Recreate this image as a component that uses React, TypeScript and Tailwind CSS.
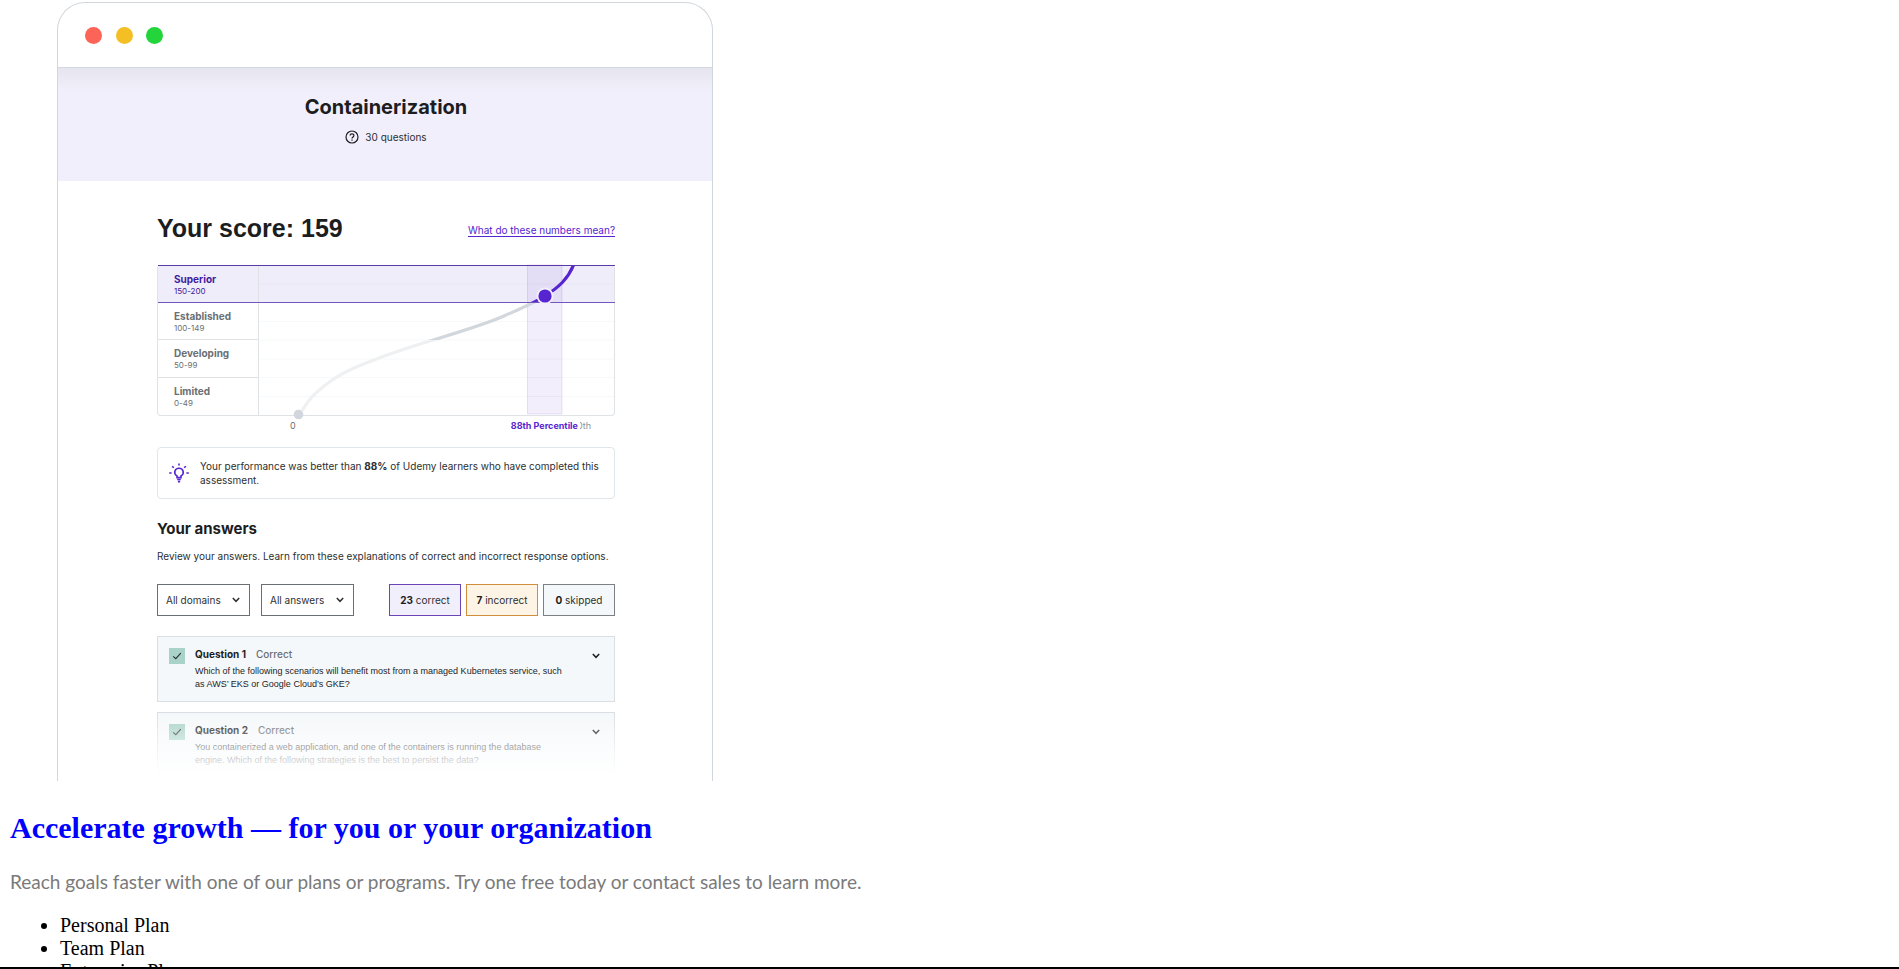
import { useState } from "react";

const levels = [
  { name: "Superior", range: "150-200" },
  { name: "Established", range: "100-149" },
  { name: "Developing", range: "50-99" },
  { name: "Limited", range: "0-49" },
];

const questions = [
  {
    title: "Question 1",
    text: "Which of the following scenarios will benefit most from a managed Kubernetes service, such as AWS’ EKS or Google Cloud’s GKE?",
  },
  {
    title: "Question 2",
    text: "You containerized a web application, and one of the containers is running the database engine. Which of the following strategies is the best to persist the data?",
  },
];

const curve =
  "M43 146 C47 139 51 133 57 128 C75 111 93 103 115 95 C151 80 211 66 245 51 C263 43 273 39 286 31 C300 22 309 14 315 -1";

function Chevron({ className }: { className: string }) {
  return (
    <svg viewBox="0 0 8 6" className={className} fill="none" stroke="currentColor" strokeWidth="1.5" aria-hidden="true">
      <path d="M0.8 1 L4 4.3 L7.2 1" />
    </svg>
  );
}

function Filter({ id, label }: { id: string; label: string }) {
  return (
    <div className="relative w-[93px]">
      <select
        id={id}
        aria-label={label}
        className="h-8 w-full appearance-none border border-[#6a6f73] bg-white pl-2 text-[10px] text-[#2d2f31]"
      >
        <option>{label}</option>
      </select>
      <Chevron className="pointer-events-none absolute top-[13px] right-[10px] h-[6px] w-2 text-[#2d2f31]" />
    </div>
  );
}

function Plot() {
  return (
    <svg viewBox="0 0 355 150" className="block h-[150px] w-full overflow-visible" preserveAspectRatio="none" aria-hidden="true">
      <defs>
        <clipPath id="top"><rect x="0" y="0" width="355" height="37.5" /></clipPath>
        <clipPath id="mid"><rect x="0" y="37.5" width="355" height="37.5" /></clipPath>
        <clipPath id="low"><rect x="0" y="75" width="355" height="75" /></clipPath>
      </defs>
      <g stroke="#f7f8f9">
        {[56.5, 75, 94, 112.5, 131.5].map((y) => (
          <line key={y} x1="0" x2="355" y1={y} y2={y} />
        ))}
      </g>
      <line x1="0" x2="355" y1="19" y2="19" stroke="#e9e6f5" />
      <rect x="268.5" y="0" width="34.5" height="149" fill="#5624d0" fillOpacity="0.08" stroke="#5624d0" strokeOpacity="0.12" />
      <g fill="none" strokeWidth="3.2">
        <path d={curve} stroke="#eff0f2" clipPath="url(#low)" />
        <path d={curve} stroke="#d1d7dc" clipPath="url(#mid)" />
        <path d={curve} stroke="#5624d0" clipPath="url(#top)" />
      </g>
      <path d="M-1 37.5 H356" stroke="#7556bd" />
      <path d="M-1 0.5 H356" stroke="#5b3aa8" />
      <circle cx="39.5" cy="149.5" r="4.8" fill="#d1d7dc" />
      <circle cx="286" cy="31" r="8.5" fill="#f1effb" />
      <circle cx="286" cy="31" r="6.6" fill="#5624d0" />
    </svg>
  );
}

function ScoreChart() {
  return (
    <div className="mt-[21px]">
      <div className="grid h-[151px] grid-cols-[101px_1fr] rounded-sm border border-t-0 border-[#dfe3e6] bg-linear-to-b from-[#f0edfa] from-25% to-white to-25%">
        <ul className="grid grid-rows-4 border-r border-[#dfe3e6]">
          {levels.map((level, i) => (
            <li
              key={level.name}
              className={
                i === 0
                  ? "border-t border-b border-t-[#5b3aa8] border-b-[#7556bd] pt-[7px] pl-4 text-[#401b9c]"
                  : i === 3
                    ? "pt-[7px] pl-4 text-[#6a6f73]"
                    : "border-b border-[#dfe3e6] pt-[7px] pl-4 text-[#6a6f73]"
              }
            >
              <div className="text-[10px] leading-3 font-bold">{level.name}</div>
              <div className="text-[8px] leading-3">{level.range}</div>
            </li>
          ))}
        </ul>
        <Plot />
      </div>
      <div className="flex justify-between pr-[24px] pl-[133px] text-[9px] leading-5">
        <span className="text-[#6a6f73]">0</span>
        <span className="flex">
          <span className="z-10 bg-white pr-[2px] font-bold text-[#5624d0]">88th Percentile</span>
          <span className="-ml-[3px] text-[#8d9195]">0th</span>
        </span>
      </div>
    </div>
  );
}

function Question({ title, text }: { title: string; text: string }) {
  const [open, setOpen] = useState(false);
  return (
    <button
      type="button"
      aria-expanded={open}
      onClick={() => setOpen(!open)}
      className="flex h-[66px] w-full items-start border border-[#d9dfe3] bg-[#f5f8fa] pt-[11px] pr-[14px] pl-[11px] text-left"
    >
      <span className="flex h-4 w-4 shrink-0 items-center justify-center bg-[#a9d2c9]">
        <svg viewBox="0 0 16 16" className="h-4 w-4" fill="none" stroke="#2d2f31" strokeWidth="1.1" aria-hidden="true">
          <path d="M4.2 8.3 L6.8 10.7 L11.8 5.2" />
        </svg>
      </span>
      <span className="ml-[10px] flex-1">
        <span className="flex gap-[10px] text-[10px] leading-3">
          <span className="font-bold text-[#1c1d1f]">{title}</span>
          <span className="font-medium text-[#6a6f73]">Correct</span>
        </span>
        <span className="mt-[5px] block max-w-[376px] font-['Liberation_Sans',sans-serif] text-[9px] leading-[13px] text-[#1c1d1f]">
          {text}
        </span>
      </span>
      <Chevron className="mt-[5px] h-[6px] w-2 text-[#1c1d1f]" />
    </button>
  );
}

function Tally({ count, label, tone }: { count: number; label: string; tone: string }) {
  return (
    <button type="button" className={`h-8 w-[72px] border text-[10px] text-[#2d2f31] ${tone}`}>
      <b className="text-[#1c1d1f]">{count}</b> {label}
    </button>
  );
}

function AssessmentWindow() {
  return (
    <section className="h-[779px] max-w-[656px] overflow-hidden rounded-t-[28px] border border-b-0 border-[#d1d7dc] font-[Inter,sans-serif] text-[#2d2f31]">
      <div className="h-[65px] border-b border-[#d1d7dc] pt-6 pl-[27px]">
        <div className="flex w-[78px] justify-between">
          <span className="h-[17px] w-[17px] rounded-full bg-[#fd6458]" />
          <span className="h-[17px] w-[17px] rounded-full bg-[#f4bf24]" />
          <span className="h-[17px] w-[17px] rounded-full bg-[#23d43b]" />
        </div>
      </div>
      <header className="h-[113px] bg-linear-to-b from-[#e6e4ef] to-[#f1effb] to-20% pt-[25px] pl-[2px] text-center">
        <h2 className="text-[20px] leading-7 font-bold text-[#1c1d1f]">Containerization</h2>
        <p className="mt-[8px] flex items-center justify-center gap-[6px] text-[10px] leading-4">
          <svg viewBox="0 0 14 14" className="h-[14px] w-[14px]" fill="none" stroke="#1c1d1f" strokeWidth="1.2" aria-hidden="true">
            <circle cx="7" cy="7" r="6" />
            <path d="M5.1 5.6 C5.1 3.2 8.9 3.2 8.9 5.5 C8.9 6.9 7 7 7 8.6 M7 9.5 V10.8" />
          </svg>
          30 questions
        </p>
      </header>
      <div className="ml-[99px] max-w-[458px] pt-[31px]">
        <div className="flex items-center justify-between">
          <h1 className="font-['Liberation_Sans',sans-serif] text-[25px] leading-8 font-bold text-[#1c1d1f]">Your score: 159</h1>
          <a href="#numbers" className="mt-1 border-b border-[#5624d0] text-[10px] leading-3 text-[#5624d0]">
            What do these numbers mean?
          </a>
        </div>
        <ScoreChart />
        <div className="mt-[11px] flex h-[52px] items-center gap-[11px] rounded-sm border border-[#e0e6e9] pr-1 pl-[11px]">
          <svg viewBox="0 0 20 20" className="h-5 w-5 shrink-0" fill="none" stroke="#5624d0" strokeWidth="1.6" aria-hidden="true">
            <path d="M8 14.6 V12.9 C4.2 10.6 5.5 5.2 10 5.2 C14.5 5.2 15.8 10.6 12 12.9 V14.6 Z" />
            <path d="M8.2 16.5 H11.8 M8.9 18.6 H11.1 M10 0.4 V2.6 M0.2 10 H2.6 M17.4 10 H19.8 M3.2 3.2 L4.8 4.8 M16.8 3.2 L15.2 4.8" />
          </svg>
          <p className="text-[10px] leading-[14px]">
            Your performance was better than <b>88%</b> of Udemy learners who have completed this assessment.
          </p>
        </div>
        <h2 className="mt-5 text-[15px] leading-5 font-bold text-[#1c1d1f]">Your answers</h2>
        <p className="mt-[9px] text-[10px] leading-4">
          Review your answers. Learn from these explanations of correct and incorrect response options.
        </p>
        <div className="mt-5 flex justify-between">
          <div className="flex gap-[11px]">
            <Filter id="domains" label="All domains" />
            <Filter id="answers" label="All answers" />
          </div>
          <div className="flex gap-[5px]">
            <Tally count={23} label="correct" tone="border-[#6a45b8] bg-[#f1effb]" />
            <Tally count={7} label="incorrect" tone="border-[#cf8e3c] bg-[#fdf4e6]" />
            <Tally count={0} label="skipped" tone="border-[#7c8084] bg-[#f5f8fa]" />
          </div>
        </div>
        <div className="relative mt-5 flex flex-col gap-[10px]">
          {questions.map((q) => (
            <Question key={q.title} {...q} />
          ))}
          <div className="pointer-events-none absolute inset-x-0 bottom-0 h-[66px] bg-linear-to-b from-transparent via-white/60 via-55% to-white to-95%" />
        </div>
      </div>
    </section>
  );
}

export default function App() {
  return (
    <main className="h-screen overflow-hidden border-b-2 border-black bg-white pt-[2px] font-['Liberation_Serif',serif] text-[20px] leading-[23px] text-black">
      <div className="pl-[57px]">
        <AssessmentWindow />
      </div>
      <div className="pl-[10px]">
        <h2 className="mt-[30px] text-[30px] leading-[34px] font-bold text-[#0000ff]">
          Accelerate growth — for you or your organization
        </h2>
        <p className="mt-[25px] font-[Lato,sans-serif] text-[19px] leading-6 text-[#7a7a7a]">
          Reach goals faster with one of our plans or programs. Try one free today or contact sales to learn more.
        </p>
        <ul className="mt-5 list-disc pl-[50px]">
          <li>Personal Plan</li>
          <li>Team Plan</li>
          <li>Enterprise Plan</li>
        </ul>
      </div>
    </main>
  );
}
